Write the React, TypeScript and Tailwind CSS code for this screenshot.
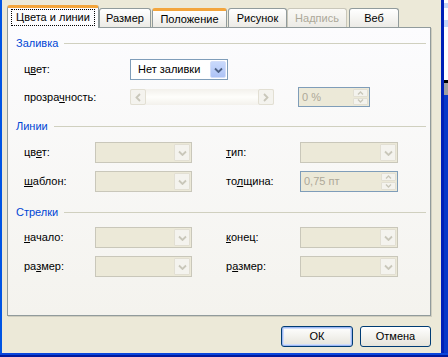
import React from "react";

const Chevron = ({ color, up }: { color: string; up?: boolean }) => (
  <svg width="9" height="6" viewBox="0 0 9 6">
    <path
      d={up ? "M1 5 L4.5 1.5 L8 5" : "M1 1.5 L4.5 5 L8 1.5"}
      fill="none"
      stroke={color}
      strokeWidth="1.8"
    />
  </svg>
);

const SmallChevron = ({ up }: { up?: boolean }) => (
  <svg width="7" height="4" viewBox="0 0 7 4">
    <path d={up ? "M1 3.5 L3.5 1 L6 3.5" : "M1 0.5 L3.5 3 L6 0.5"} fill="none" stroke="#C9C7BA" strokeWidth="1.4" />
  </svg>
);

const Arrow = ({ left }: { left?: boolean }) => (
  <svg width="6" height="9" viewBox="0 0 6 9">
    <path d={left ? "M5 1 L1.5 4.5 L5 8" : "M1 1 L4.5 4.5 L1 8"} fill="none" stroke="#C9C7BA" strokeWidth="1.8" />
  </svg>
);

// disabled combobox
const DisCombo = ({ className }: { className: string }) => (
  <div className={`${className} h-[21px] border border-[#C9C7BA] bg-[#ECE9D8] flex justify-end p-[1px]`}>
    <div className="w-[16px] h-full rounded-[1px] border border-[#E2DFD3] bg-[#F4F3EE] flex items-center justify-center">
      <Chevron color="#C9C7BA" />
    </div>
  </div>
);

const Spin = ({ className, value }: { className: string; value: string }) => (
  <div className={`${className} border border-[#7F9DB9] bg-[#ECE9D8] flex p-[1px]`}>
    <div className="flex-1 flex items-center pl-[2px] text-[#ACA899]">{value}</div>
    <div className="w-[15px] flex flex-col gap-[1px]">
      <div className="flex-1 rounded-[1px] border border-[#E2DFD3] bg-[#F4F3EE] flex items-center justify-center">
        <SmallChevron up />
      </div>
      <div className="flex-1 rounded-[1px] border border-[#E2DFD3] bg-[#F4F3EE] flex items-center justify-center">
        <SmallChevron />
      </div>
    </div>
  </div>
);

const Section = ({ title }: { title: string }) => (
  <div className="h-[14px] flex items-center pl-[8px] pr-[4px]">
    <span className="text-[#0046D5]">{title}</span>
    <div className="flex-1 h-[1px] bg-[#D0D0BF] ml-[6px]" />
  </div>
);

export default function App() {
  return (
    <div className="w-[448px] h-[357px] bg-[#ECE9D8] flex flex-col overflow-hidden font-['Liberation_Sans',Arial,sans-serif] text-[11px] text-black leading-none">
      <div className="flex h-[353px]">
        <div className="w-[2px] bg-[#0054E3]" />

        {/* dialog body */}
        <div className="w-[439px] pt-[5px] pl-[5px] flex flex-col">
          {/* tabs */}
          <div className="h-[22px] flex items-end">
            <div className="relative z-10 w-[92px] h-[23px] -mb-[1px] rounded-t-[3px] border-x border-[#919B9C] border-t-[3px] border-t-[#F3A53C] bg-[#FCFCFE] flex items-start justify-center pt-[1px]">
              <span className="border border-dotted border-black px-[4px] h-[17px] flex items-center">Цвета и линии</span>
            </div>
            <div className="w-[52px] h-[19px] rounded-t-[3px] border-x border-t border-[#919B9C] bg-gradient-to-b from-white to-[#ECEBE6] flex items-center justify-center">
              Размер
            </div>
            <div className="ml-[1px] w-[75px] h-[19px] rounded-t-[3px] border-x border-[#919B9C] border-t-[3px] border-t-[#F3A53C] bg-gradient-to-b from-white to-[#ECEBE6] flex items-center justify-center">
              Положение
            </div>
            <div className="ml-[1px] w-[59px] h-[19px] rounded-t-[3px] border-x border-t border-[#919B9C] bg-gradient-to-b from-white to-[#ECEBE6] flex items-center justify-center">
              Рисунок
            </div>
            <div className="w-[60px] h-[19px] rounded-t-[3px] border-x border-t border-[#C9C7BA] bg-gradient-to-b from-[#FAF9F5] to-[#ECEBE6] flex items-center justify-center text-[#ACA899]">
              Надпись
            </div>
            <div className="ml-[2px] w-[50px] h-[19px] rounded-t-[3px] border-x border-t border-[#919B9C] bg-gradient-to-b from-white to-[#ECEBE6] flex items-center justify-center">
              Веб
            </div>
          </div>

          {/* panel */}
          <div className="w-[424px] h-[289px] border border-[#919B9C] bg-gradient-to-b from-[#FCFCFE] to-[#F4F3EE] shadow-[1px_1px_0_#D0CEBF] flex flex-col">
            <div className="mt-[8px]">
              <Section title="Заливка" />
            </div>

            <div className="mt-[9px] h-[21px] flex items-center pl-[16px]">
              <div className="w-[106px]">
                ц<span className="underline">в</span>ет:
              </div>
              <div className="w-[98px] h-[21px] border border-[#7F9DB9] bg-white flex p-[1px]">
                <div className="flex-1 flex items-center pl-[6px]">Нет заливки</div>
                <div className="w-[16px] h-full rounded-[2px] border border-[#D2DDF9] bg-gradient-to-b from-[#C9D9FC] to-[#ADC3F5] flex items-center justify-center">
                  <Chevron color="#4D6185" />
                </div>
              </div>
            </div>

            <div className="mt-[7px] h-[20px] flex items-center pl-[16px]">
              <div className="w-[106px]">
                прозра<span className="underline">ч</span>ность:
              </div>
              <div className="w-[144px] h-[16px] bg-gradient-to-b from-[#F3F1EC] via-[#FEFEFB] to-[#F3F1EC] flex justify-between">
                <div className="w-[16px] h-full rounded-[2px] border border-[#E2DFD3] bg-[#F4F3EE] flex items-center justify-center">
                  <Arrow left />
                </div>
                <div className="w-[16px] h-full rounded-[2px] border border-[#E2DFD3] bg-[#F4F3EE] flex items-center justify-center">
                  <Arrow />
                </div>
              </div>
              <Spin className="ml-[24px] w-[72px] h-[20px]" value="0 %" />
            </div>

            <div className="mt-[12px]">
              <Section title="Линии" />
            </div>

            <div className="mt-[9px] h-[21px] flex items-center pl-[16px]">
              <div className="w-[71px]">
                цв<span className="underline">е</span>т:
              </div>
              <DisCombo className="w-[97px]" />
              <div className="ml-[34px] w-[74px]">
                <span className="underline">т</span>ип:
              </div>
              <DisCombo className="w-[98px]" />
            </div>

            <div className="mt-[8px] h-[21px] flex items-center pl-[16px]">
              <div className="w-[71px]">
                <span className="underline">ш</span>аблон:
              </div>
              <DisCombo className="w-[97px]" />
              <div className="ml-[34px] w-[74px]">
                то<span className="underline">л</span>щина:
              </div>
              <Spin className="w-[98px] h-[21px]" value="0,75 пт" />
            </div>

            <div className="mt-[13px]">
              <Section title="Стрелки" />
            </div>

            <div className="mt-[8px] h-[21px] flex items-center pl-[16px]">
              <div className="w-[71px]">
                <span className="underline">н</span>ачало:
              </div>
              <DisCombo className="w-[97px]" />
              <div className="ml-[34px] w-[74px]">
                <span className="underline">к</span>онец:
              </div>
              <DisCombo className="w-[98px]" />
            </div>

            <div className="mt-[8px] h-[21px] flex items-center pl-[16px]">
              <div className="w-[71px]">
                ра<span className="underline">з</span>мер:
              </div>
              <DisCombo className="w-[97px]" />
              <div className="ml-[34px] w-[74px]">
                р<span className="underline">а</span>змер:
              </div>
              <DisCombo className="w-[98px]" />
            </div>
          </div>

          {/* buttons */}
          <div className="mt-[10px] w-[424px] flex justify-end gap-[7px]">
            <button className="w-[72px] h-[21px] rounded-[3px] border border-[#003C74] bg-gradient-to-b from-white to-[#E6E4DB] shadow-[inset_0_0_0_1px_#9FB8F2,inset_0_0_0_2px_#CEDDFB] flex items-center justify-center">
              ОК
            </button>
            <button className="w-[71px] h-[21px] rounded-[3px] border border-[#003C74] bg-gradient-to-b from-white to-[#E6E4DB] flex items-center justify-center">
              Отмена
            </button>
          </div>
        </div>

        <div className="w-[3px] bg-[#0020B8]" />
        {/* window behind */}
        <div className="w-[4px] flex flex-col bg-white">
          <div className="mt-[3px] h-[5px] bg-[#C6D6F7]" />
          <div className="mt-[12px] h-[7px] bg-[#C6D6F7]" />
          <div className="mt-[53px] h-[3px] bg-black" />
          <div className="h-[12px] bg-[#A0A0A0]" />
          <div className="flex-1 bg-[#0838C8]" />
        </div>
      </div>
      <div className="h-[2px] bg-[#0A46DC]" />
      <div className="h-[2px] bg-[#001A9C]" />
    </div>
  );
}
